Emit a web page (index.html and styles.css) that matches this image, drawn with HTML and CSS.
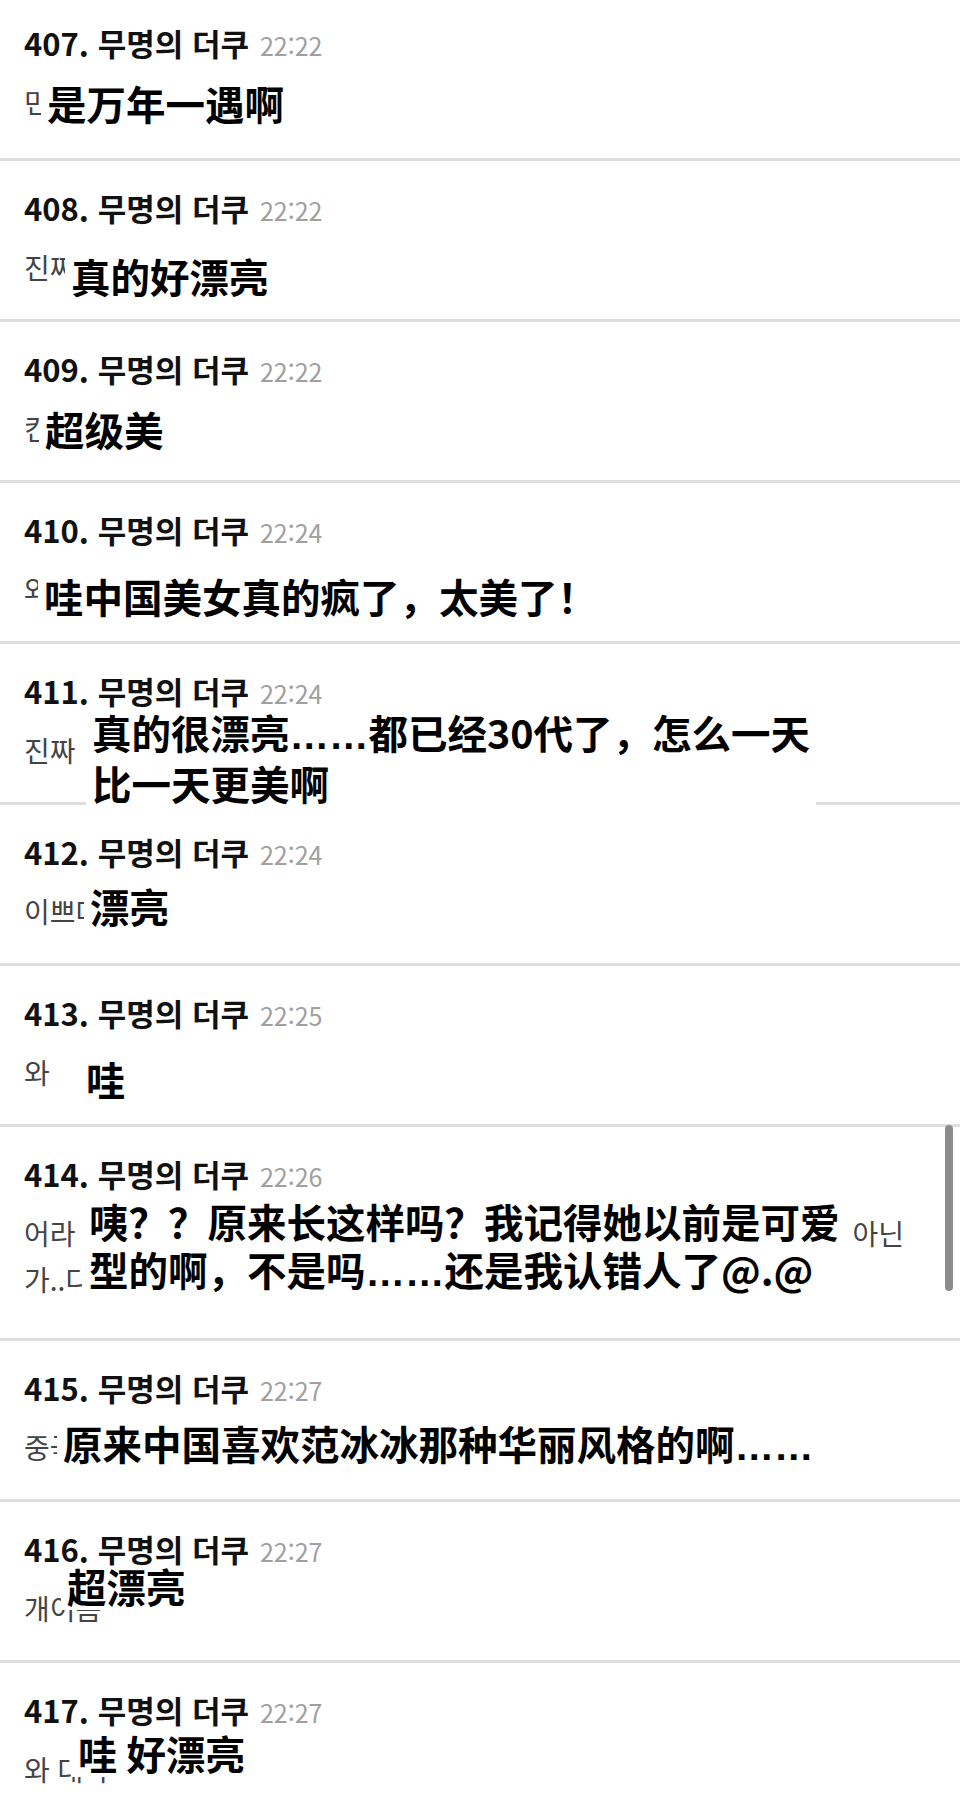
FILE: index.html
```html
<!DOCTYPE html>
<html lang="ko">
<head>
<meta charset="utf-8">
<title>무명의 더쿠</title>
<link rel="stylesheet" href="styles.css">
</head>
<body>
<main class="thread">
  <article class="post post-first p407">
    <header class="head"><span class="who">407. 무명의 더쿠</span><time class="time">22:22</time></header>
    <div class="body">
      <p class="ko">민족의 자랑</p>
      <p class="zh" lang="zh-Hans">是万年一遇啊</p>
    </div>
  </article>
  <article class="post p408">
    <header class="head"><span class="who">408. 무명의 더쿠</span><time class="time">22:22</time></header>
    <div class="body">
      <p class="ko">진짜 이쁘다</p>
      <p class="zh" lang="zh-Hans">真的好漂亮</p>
    </div>
  </article>
  <article class="post p409">
    <header class="head"><span class="who">409. 무명의 더쿠</span><time class="time">22:22</time></header>
    <div class="body">
      <p class="ko">킨</p>
      <p class="zh" lang="zh-Hans">超级美</p>
    </div>
  </article>
  <article class="post p410">
    <header class="head"><span class="who">410. 무명의 더쿠</span><time class="time">22:24</time></header>
    <div class="body">
      <p class="ko">와 중국 미녀 진짜 미쳤다 너무 예쁘다</p>
      <p class="zh" lang="zh-Hans">哇中国美女真的疯了，太美了！</p>
    </div>
  </article>
  <article class="post p411">
    <header class="head"><span class="who">411. 무명의 더쿠</span><time class="time">22:24</time></header>
    <div class="body">
      <p class="ko">진짜  너무 이쁘다 30대인데 갈수록 예뻐짐</p>
      <p class="zh" lang="zh-Hans">真的很漂亮<span class="ell">……</span>都已经30代了，怎么一天<br>比一天更美啊</p>
    </div>
  </article>
  <article class="post p412">
    <header class="head"><span class="who">412. 무명의 더쿠</span><time class="time">22:24</time></header>
    <div class="body">
      <p class="ko">이쁘다</p>
      <p class="zh" lang="zh-Hans">漂亮</p>
    </div>
  </article>
  <article class="post p413">
    <header class="head"><span class="who">413. 무명의 더쿠</span><time class="time">22:25</time></header>
    <div class="body">
      <p class="ko">와</p>
      <p class="zh" lang="zh-Hans">哇</p>
    </div>
  </article>
  <article class="post post-tall p414">
    <header class="head"><span class="who">414. 무명의 더쿠</span><time class="time">22:26</time></header>
    <div class="body">
      <p class="ko spread"><span>어라 원래 이렇게 생겼어? 귀여운 스타일</span><span>아닌</span></p>
      <p class="ko">가..다른 사람이랑 착각했나 @.@</p>
      <p class="zh" lang="zh-Hans">咦？？原来长这样吗？我记得她以前是可爱<br>型的啊，不是吗<span class="ell">……</span>还是我认错人了@.@</p>
    </div>
  </article>
  <article class="post p415">
    <header class="head"><span class="who">415. 무명의 더쿠</span><time class="time">22:27</time></header>
    <div class="body">
      <p class="ko">중국은 판빙빙 같은 화려한 스타일 좋아하는구나</p>
      <p class="zh" lang="zh-Hans">原来中国喜欢范冰冰那种华丽风格的啊<span class="ell">……</span></p>
    </div>
  </article>
  <article class="post p416">
    <header class="head"><span class="who">416. 무명의 더쿠</span><time class="time">22:27</time></header>
    <div class="body">
      <p class="ko">개이쁨</p>
      <p class="zh" lang="zh-Hans">超漂亮</p>
    </div>
  </article>
  <article class="post post-last p417">
    <header class="head"><span class="who">417. 무명의 더쿠</span><time class="time">22:27</time></header>
    <div class="body">
      <p class="ko">와 대박</p>
      <p class="zh" lang="zh-Hans">哇 好漂亮</p>
    </div>
  </article>
  <div class="scroll-thumb"></div>
</main>
</body>
</html>
```

FILE: styles.css
```css
* { box-sizing: border-box; margin: 0; padding: 0; }

html, body { background: #fff; }

body {
  width: 960px;
  height: 1803px;
  overflow: hidden;
  font-family: "Noto Sans CJK KR", "Noto Sans", sans-serif;
}

.thread { position: relative; }

.post {
  height: 161px;
  padding: 28.5px 0 0 24px;
  border-bottom: 3px solid #dedede;
}
.post-first { padding-top: 25px; }
.post-tall { height: 214px; }
.post-last { height: 140px; border-bottom: 0; }

.head {
  position: relative;
  z-index: 2;
  display: flex;
  align-items: baseline;
  height: 36px;
  line-height: 36px;
}
.who { font-size: 31px; font-weight: 700; color: #111; }
.time { font-size: 25px; color: #a0a0a0; margin-left: 11px; }

.body { position: relative; margin-top: 18px; }

.ko {
  font-size: 28px;
  line-height: 46px;
  color: #444;
  white-space: pre;
}
.spread { display: flex; justify-content: space-between; width: 880px; }

.zh {
  position: absolute;
  z-index: 1;
  top: 0;
  left: 17px;
  padding: 0 6px;
  background: #fff;
  font-family: "Noto Sans CJK SC", sans-serif;
  font-size: 39.5px;
  font-weight: 700;
  line-height: 48px;
  color: #000;
  white-space: nowrap;
}
.ell { font-family: "Liberation Sans", Arial, sans-serif; font-weight: 700; }

.p407 .zh { top: 0; left: 17px; }
.p408 .zh { top: 8px; left: 41px; }
.p409 .zh { top: 0; left: 15px; }
.p410 .zh { top: 6px; left: 14px; }
.p411 .zh { top: -19px; left: 62px; padding-bottom: 8px; }
.p412 .zh { top: -6px; left: 60px; }
.p413 .zh { top: 6px; left: 56px; }
.p414 .zh { top: -13px; left: 59px; }
.p415 .zh { top: -5px; left: 33px; }
.p416 .zh { top: -23px; left: 37px; }
.p417 .zh { top: -17px; left: 48px; }

.scroll-thumb {
  position: absolute;
  top: 1125px;
  right: 7px;
  width: 8px;
  height: 166px;
  border-radius: 4px;
  background: #8c8c8c;
}
```
